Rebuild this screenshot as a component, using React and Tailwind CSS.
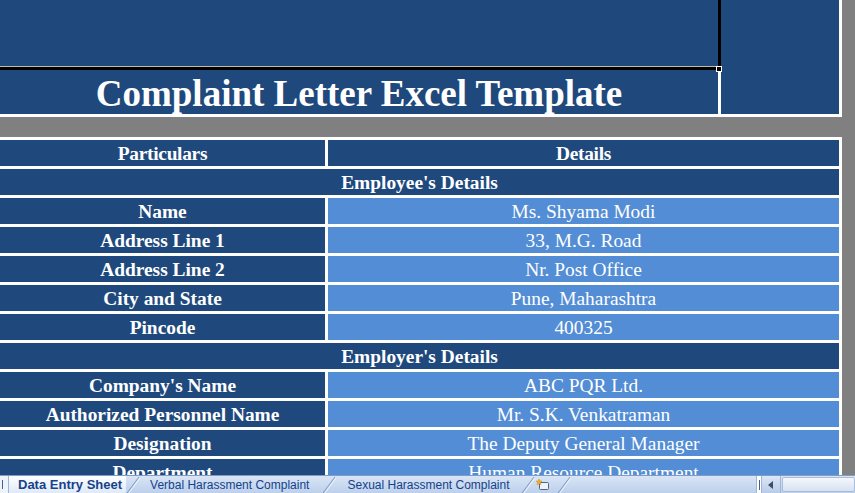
import React from "react";

const DARK = "bg-[#1f497d]";
const LIGHT = "bg-[#538dd5]";

const rows = [
  { type: "head" },
  { type: "section", text: "Employee's Details" },
  { type: "row", l: "Name", r: "Ms. Shyama Modi" },
  { type: "row", l: "Address Line 1", r: "33, M.G. Road" },
  { type: "row", l: "Address Line 2", r: "Nr. Post Office" },
  { type: "row", l: "City and State", r: "Pune, Maharashtra" },
  { type: "row", l: "Pincode", r: "400325" },
  { type: "section", text: "Employer's Details" },
  { type: "row", l: "Company's Name", r: "ABC PQR Ltd." },
  { type: "row", l: "Authorized Personnel Name", r: "Mr. S.K. Venkatraman" },
  { type: "row", l: "Designation", r: "The Deputy General Manager" },
  { type: "row", l: "Department", r: "Human Resource Department" },
];

function Slant() {
  return (
    <svg width="14" height="18" viewBox="0 0 14 18" className="shrink-0 block">
      <line x1="13" y1="1" x2="1" y2="17" stroke="#7d97c0" strokeWidth="1" />
      <line x1="14" y1="2" x2="3" y2="17" stroke="#ffffff" strokeWidth="1" opacity="0.7" />
    </svg>
  );
}

function Row({ r }) {
  const serif = { fontFamily: '"Liberation Serif", "Times New Roman", serif' };
  if (r.type === "head") {
    return (
      <div className="flex gap-[3px] h-[26px] shrink-0">
        <div className={`w-[325px] ${DARK} flex items-center justify-center pt-[1px] text-white font-bold text-[19.4px] tracking-[-0.3px]`} style={serif}>
          Particulars
        </div>
        <div className={`flex-1 ${DARK} flex items-center justify-center pt-[1px] text-white font-bold text-[19.4px] tracking-[-0.3px]`} style={serif}>
          Details
        </div>
      </div>
    );
  }
  if (r.type === "section") {
    return (
      <div className={`h-[26px] shrink-0 ${DARK} flex items-center justify-center pt-[1px] text-white font-bold text-[19.4px]`} style={serif}>
        {r.text}
      </div>
    );
  }
  return (
    <div className="flex gap-[3px] h-[26px] shrink-0">
      <div className={`w-[325px] ${DARK} flex items-center justify-center pt-[1px] text-white font-bold text-[19.4px] whitespace-nowrap`} style={serif}>
        {r.l}
      </div>
      <div className={`flex-1 ${LIGHT} flex items-center justify-center pt-[1px] text-white text-[19.4px] whitespace-nowrap`} style={serif}>
        {r.r}
      </div>
    </div>
  );
}

export default function App() {
  const tabFont2 = { fontFamily: '"Liberation Sans", Arial, sans-serif' };
  return (
    <div className="w-[855px] h-[493px] bg-[#808080] flex flex-col overflow-hidden">
      <div className="flex-1 overflow-hidden flex flex-col">
        {/* Title block */}
        <div className="relative w-[842px] bg-white pr-[3px] pb-[3px] flex shrink-0">
          <div className="w-[718px] flex flex-col">
            <div className={`h-[66px] ${DARK}`}></div>
            <div className="h-[1px] bg-[#c8b8a0]"></div>
            <div className="h-[3px] bg-black"></div>
            <div
              className={`h-[44px] ${DARK} flex items-center justify-center text-white font-bold text-[37px] leading-none pt-[2px]`}
              style={{ fontFamily: '"Liberation Serif", "Times New Roman", serif' }}
            >
              Complaint Letter Excel Template
            </div>
          </div>
          <div className="w-[3px] flex flex-col">
            <div className="h-[70px] bg-black"></div>
            <div className="flex-1 bg-white"></div>
          </div>
          <div className={`w-[118px] ${DARK}`}></div>
          <div className="absolute left-[716px] top-[66px] w-[6px] h-[6px] bg-black border border-white"></div>
        </div>

        <div className="h-[20px] shrink-0"></div>

        {/* Table */}
        <div className="w-[842px] bg-white pt-[3px] pr-[3px] flex flex-col gap-[3px]">
          {rows.map((r, i) => (
            <Row key={i} r={r} />
          ))}
        </div>
      </div>

      {/* Sheet tab bar */}
      <div className="h-[18px] shrink-0 flex items-stretch border-t border-[#7f9cc7] bg-gradient-to-b from-[#d9e5f5] to-[#bcd0ec] text-[#15428b] relative">
        <div className="w-[9px] bg-[#eef3fa] border-r border-[#9fb5d6] flex items-center justify-start pl-[2px]">
          <div className="w-[1px] h-[9px] bg-[#44628f]"></div>
        </div>
        <div className="flex items-center pl-[9px] pr-[4px] bg-gradient-to-b from-[#ffffff] to-[#dfe9f7] font-bold text-[13px] whitespace-nowrap" style={tabFont2}>
          Data Entry Sheet
        </div>
        <Slant />
        <div className="flex items-center pl-[10px] pr-[13px] text-[12px] whitespace-nowrap" style={tabFont2}>
          Verbal Harassment Complaint
        </div>
        <Slant />
        <div className="flex items-center pl-[11px] pr-[11px] text-[12px] whitespace-nowrap" style={tabFont2}>
          Sexual Harassment Complaint
        </div>
        <Slant />
        <div className="flex items-center pl-[0px] pr-[6px]">
          <svg width="16" height="14" viewBox="0 0 16 14">
            <rect x="4.5" y="4.5" width="9" height="7" rx="1" fill="#eef3fa" stroke="#55657e" />
            <path d="M4 1 L4.8 3 L7 3.2 L5.3 4.5 L5.9 6.6 L4 5.4 L2.1 6.6 L2.7 4.5 L1 3.2 L3.2 3 Z" fill="#f5b321" stroke="#d9820a" strokeWidth="0.5" />
          </svg>
        </div>
        <Slant />
        <div className="flex-1"></div>
        <div className="w-[6px] bg-white border-x border-[#9fb5d6] flex items-center justify-center">
          <div className="w-[1px] h-[10px] bg-[#44628f]"></div>
        </div>
        <div className="w-[19px] bg-gradient-to-b from-[#dde7f5] to-[#b7cbe8] border-r border-[#9fb5d6] flex items-center justify-center">
          <svg width="6" height="8" viewBox="0 0 6 8">
            <path d="M5 0 L0 4 L5 8 Z" fill="#3b4d6b" />
          </svg>
        </div>
        <div className="flex-1 max-w-[73px] ml-[1px] my-[1px] rounded-[2px] border border-[#a9bcd8] bg-gradient-to-b from-[#f4f7fc] to-[#d6e1f1]"></div>
      </div>
    </div>
  );
}
